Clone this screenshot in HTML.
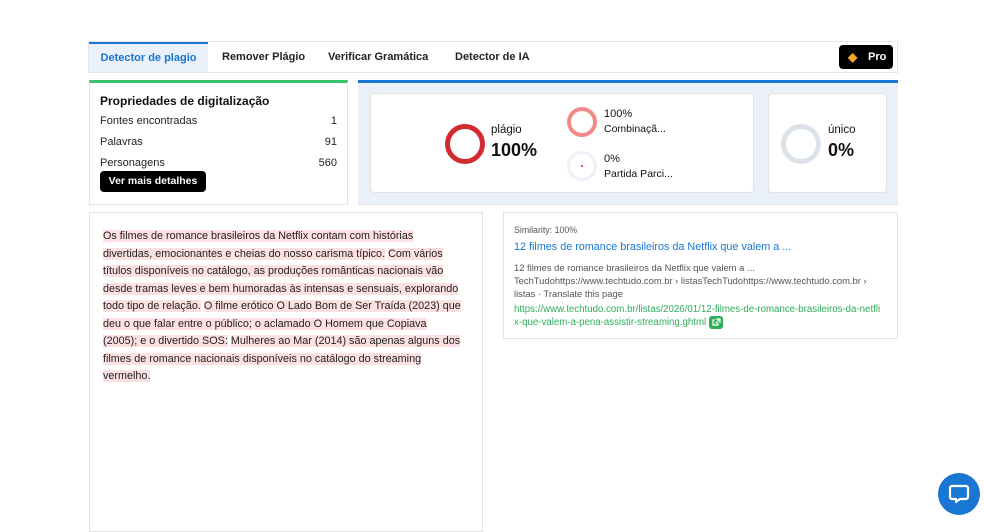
<!DOCTYPE html>
<html><head><meta charset="utf-8"><style>
*{box-sizing:border-box;margin:0;padding:0}
body{width:984px;height:523px;background:#fff;font-family:"Liberation Sans",sans-serif;color:#111;position:relative;overflow:hidden}
.abs{position:absolute}
.tabs{left:88px;top:41px;width:810px;height:32px;border:1px solid #e6e6e6;background:#fff}
.tab{position:absolute;top:0;height:30px;line-height:31px;font-size:11px;font-weight:bold;color:#222}
.act{left:0;width:119px;background:#eaf1fa;border-top:2px solid #1976d2;color:#1976d2;text-align:center;line-height:29px}
.pro{right:4px;top:3px;width:54px;height:24px;background:#000;border-radius:4px;color:#fff;font-size:11px;font-weight:bold;line-height:24px;padding-left:29px}
.card{border:1px solid #e2e2e2;background:#fff}
.row{position:absolute;left:10px;right:10px;font-size:11px;color:#222}
.row span{float:right}
.ring{position:absolute;border-radius:50%}
.hl{background:#fde0e2}
</style></head><body>
<div class="abs tabs">
 <div class="tab act">Detector de plagio</div>
 <div class="tab" style="left:133px">Remover Plágio</div>
 <div class="tab" style="left:239px">Verificar Gramática</div>
 <div class="tab" style="left:366px">Detector de IA</div>
 <div class="abs pro"><span style="position:absolute;left:9px;top:0;color:#f5a623;font-size:12px">◆</span>Pro</div>
</div>

<div class="abs card" style="left:89px;top:80px;width:259px;height:125px;border-top:3px solid #3ac26a">
 <div class="abs" style="left:10px;top:11px;font-size:12px;font-weight:bold">Propriedades de digitalização</div>
 <div class="row" style="top:32px">Fontes encontradas<span>1</span></div>
 <div class="row" style="top:53px">Palavras<span>91</span></div>
 <div class="row" style="top:74px">Personagens<span>560</span></div>
 <div class="abs" style="left:10px;top:88px;width:106px;height:21px;background:#000;color:#fff;border-radius:4px;font-size:10.5px;font-weight:bold;text-align:center;line-height:21px">Ver mais detalhes</div>
</div>

<div class="abs" style="left:358px;top:80px;width:540px;height:125px;background:#e9f0f8;border-top:3px solid #1976d2;border-bottom:1px solid #e0e0e0">
 <div class="abs card" style="left:12px;top:10px;width:384px;height:100px;border-radius:4px">
  <div class="ring" style="left:74px;top:30px;width:40px;height:40px;border:5px solid #d12a2f"></div>
  <div class="abs" style="left:120px;top:30px;font-size:11.5px">plágio</div>
  <div class="abs" style="left:120px;top:46px;font-size:18px;font-weight:bold">100%</div>
  <div class="ring" style="left:196px;top:13px;width:30px;height:30px;border:4px solid #f28a8a"></div>
  <div class="abs" style="left:233px;top:14px;font-size:11px">100%</div>
  <div class="abs" style="left:233px;top:29px;font-size:10.5px">Combinaçã...</div>
  <div class="ring" style="left:196px;top:57px;width:30px;height:30px;border:3px solid #edf1f7"></div>
  <div class="abs" style="left:210px;top:71px;width:2px;height:2px;background:#d12a2f;border-radius:50%"></div>
  <div class="abs" style="left:233px;top:59px;font-size:11px">0%</div>
  <div class="abs" style="left:233px;top:74px;font-size:10.5px">Partida Parci...</div>
 </div>
 <div class="abs card" style="left:410px;top:10px;width:119px;height:100px;border-radius:4px">
  <div class="ring" style="left:12px;top:30px;width:40px;height:40px;border:5px solid #dce2ea"></div>
  <div class="abs" style="left:59px;top:30px;font-size:11.5px">único</div>
  <div class="abs" style="left:59px;top:46px;font-size:18px;font-weight:bold">0%</div>
 </div>
</div>

<div class="abs card" style="left:89px;top:212px;width:394px;height:320px">
 <div class="abs" style="left:13px;top:15px;font-size:10.8px;line-height:17.5px;color:#222;white-space:nowrap">
<span class="hl">Os filmes de romance brasileiros da Netflix contam com histórias</span><br>
<span class="hl">divertidas, emocionantes e cheias do nosso carisma típico.</span> <span class="hl">Com vários</span><br>
<span class="hl">títulos disponíveis no catálogo, as produções românticas nacionais vão</span><br>
<span class="hl">desde tramas leves e bem humoradas às intensas e sensuais, explorando</span><br>
<span class="hl">todo tipo de relação.</span> <span class="hl">O filme erótico O Lado Bom de Ser Traída (2023) que</span><br>
<span class="hl">deu o que falar entre o público; o aclamado O Homem que Copiava</span><br>
<span class="hl">(2005); e o divertido SOS:</span> <span class="hl">Mulheres ao Mar (2014) são apenas alguns dos</span><br>
<span class="hl">filmes de romance nacionais disponíveis no catálogo do streaming</span><br>
<span class="hl">vermelho.</span>
 </div>
</div>

<div class="abs card" style="left:503px;top:212px;width:395px;height:127px">
 <div class="abs" style="left:10px;top:12px;font-size:8.8px;color:#555">Similarity: 100%</div>
 <div class="abs" style="left:10px;top:28px;font-size:10.8px;color:#1976d2;white-space:nowrap">12 filmes de romance brasileiros da Netflix que valem a ...</div>
 <div class="abs" style="left:10px;top:48px;font-size:9.4px;line-height:13px;color:#555;white-space:nowrap">12 filmes de romance brasileiros da Netflix que valem a ...<br>TechTudohttps://www.techtudo.com.br › listasTechTudohttps://www.techtudo.com.br ›<br>listas · Translate this page</div>
 <div class="abs" style="left:10px;top:90px;font-size:9.7px;line-height:13px;color:#2fae5a;white-space:nowrap">https://www.techtudo.com.br/listas/2026/01/12-filmes-de-romance-brasileiros-da-netfli<br>x-que-valem-a-pena-assistir-streaming.ghtml <span style="display:inline-block;width:14px;height:13px;background:#2fae5a;border-radius:3px;vertical-align:middle;position:relative"><svg width="14" height="13" style="position:absolute;left:0;top:0"><path d="M6 4H4v5h5V7M7 3h4v4M11 3L6.5 7.5" stroke="#fff" stroke-width="1.2" fill="none"/></svg></span></div>
</div>

<div class="abs" style="left:938px;top:473px;width:42px;height:42px;border-radius:50%;background:#1976d2">
 <svg width="42" height="42"><path d="M14 13h14a2 2 0 0 1 2 2v9a2 2 0 0 1-2 2h-6l-4 3v-3h-4a2 2 0 0 1-2-2v-9a2 2 0 0 1 2-2z" stroke="#fff" stroke-width="2.2" fill="none" stroke-linejoin="round"/></svg>
</div>
</body></html>
